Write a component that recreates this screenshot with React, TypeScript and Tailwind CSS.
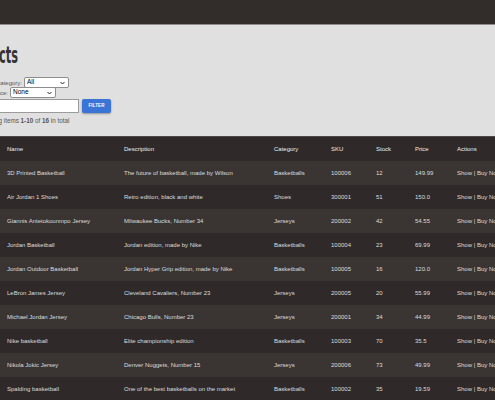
import React from 'react'

// Products index — table of basketball gear with a tiny filter form on top.

type Product = {
  name: string
  description: string
  category: string
  sku: string
  stock: number
  price: string
}

const PRODUCTS: Product[] = [
  { name: '3D Printed Basketball', description: 'The future of basketball, made by Wilson', category: 'Basketballs', sku: '100006', stock: 12, price: '149.99' },
  { name: 'Air Jordan 1 Shoes', description: 'Retro edition, black and white', category: 'Shoes', sku: '300001', stock: 51, price: '150.0' },
  { name: 'Giannis Antetokounmpo Jersey', description: 'Milwaukee Bucks, Number 34', category: 'Jerseys', sku: '200002', stock: 42, price: '54.55' },
  { name: 'Jordan Basketball', description: 'Jordan edition, made by Nike', category: 'Basketballs', sku: '100004', stock: 23, price: '69.99' },
  { name: 'Jordan Outdoor Basketball', description: 'Jordan Hyper Grip edition, made by Nike', category: 'Basketballs', sku: '100005', stock: 16, price: '120.0' },
  { name: 'LeBron James Jersey', description: 'Cleveland Cavaliers, Number 23', category: 'Jerseys', sku: '200005', stock: 20, price: '55.99' },
  { name: 'Michael Jordan Jersey', description: 'Chicago Bulls, Number 23', category: 'Jerseys', sku: '200001', stock: 34, price: '44.99' },
  { name: 'Nike basketball', description: 'Elite championship edition', category: 'Basketballs', sku: '100003', stock: 70, price: '35.5' },
  { name: 'Nikola Jokic Jersey', description: 'Denver Nuggets, Number 15', category: 'Jerseys', sku: '200006', stock: 73, price: '49.99' },
  { name: 'Spalding basketball', description: 'One of the best basketballs on the market', category: 'Basketballs', sku: '100002', stock: 35, price: '19.59' },
]

function Select({ value, width }: { value: string; width: string }) {
  return (
    <div className={`flex h-[11px] shrink-0 items-center justify-between rounded-[2px] border border-[#8d8d8d] bg-white pl-[2px] pr-[3px] text-[6.5px] leading-none text-black ${width}`}>
      <span>{value}</span>
      <svg width="5" height="4" viewBox="0 0 10 6" fill="none" stroke="#222" strokeWidth="2">
        <path d="M1 1l4 4 4-4" />
      </svg>
    </div>
  )
}

export default function App() {
  return (
    <div className="min-h-[400px] w-[495px] overflow-hidden bg-[#2f2a29] font-['Liberation_Sans',Arial,sans-serif]">
      <header className="h-[25px] border-b border-[#8e8a89] bg-[#322c2b]" />

      <section className="border-b border-[#4c4847] bg-[#e0e0e0] pb-[11px] pt-[19px] text-[#555]">
        <div className="-ml-[27px]">
          <h1 className="-ml-[12px] origin-left scale-x-[0.55] whitespace-nowrap font-['DejaVu_Sans_Condensed',sans-serif] text-[23px] font-bold leading-[22px] text-[#333]">
            Products
          </h1>

          <form className="mt-[11px] flex flex-col text-[6px] leading-none">
            <label className="flex items-center gap-[2px]">
              <span className="flex w-[49px] min-w-0 shrink-0 justify-end whitespace-nowrap">Filter by category:</span>
              <Select value="All" width="w-[45px]" />
            </label>
            <label className="-mt-[1px] flex items-center gap-[2px]">
              <span className="flex w-[35px] min-w-0 shrink-0 justify-end whitespace-nowrap">Filter by price:</span>
              <Select value="None" width="w-[46px]" />
            </label>
            <div className="mt-[1px] flex items-center gap-[3px]">
              <input className="h-[14px] w-[106px] border border-[#9b9b9b] bg-white" />
              <button type="button" className="h-[14px] w-[29px] rounded-[2px] bg-[#3a74d6] text-[4.5px] font-bold tracking-wide text-white shadow-[0_1px_2px_rgba(0,0,0,0.35)]">
                FILTER
              </button>
            </div>
          </form>

          <p className="mt-[4px] text-[6.3px] leading-[8px]">
            Displaying items <b>1-10</b> of <b>16</b> in total
          </p>
        </div>
      </section>

      <table className="w-[540px] table-fixed border-collapse text-left text-[6px] leading-none">
        <colgroup>
          <col className="w-[117px]" />
          <col className="w-[150px]" />
          <col className="w-[57px]" />
          <col className="w-[45px]" />
          <col className="w-[39px]" />
          <col className="w-[42px]" />
          <col />
        </colgroup>
        <thead>
          <tr className="h-[24px] bg-[#2f2a29] text-[#ececec]">
            {['Name', 'Description', 'Category', 'SKU', 'Stock', 'Price', 'Actions'].map((h) => (
              <th key={h} className="pl-[7px] font-normal">{h}</th>
            ))}
          </tr>
        </thead>
        <tbody>
          {PRODUCTS.map((p, i) => (
            <tr key={p.sku} className={`h-[24px] text-[#dcdcdc] ${i % 2 === 0 ? 'bg-[#3a3533]' : 'bg-[#2f2a29]'}`}>
              <td className="whitespace-nowrap pl-[7px]">{p.name}</td>
              <td className="whitespace-nowrap pl-[7px]">{p.description}</td>
              <td className="pl-[7px]">{p.category}</td>
              <td className="pl-[7px]">{p.sku}</td>
              <td className="pl-[7px]">{p.stock}</td>
              <td className="pl-[7px]">{p.price}</td>
              <td className="whitespace-nowrap pl-[7px]">Show | Buy Now</td>
            </tr>
          ))}
        </tbody>
      </table>
    </div>
  )
}
